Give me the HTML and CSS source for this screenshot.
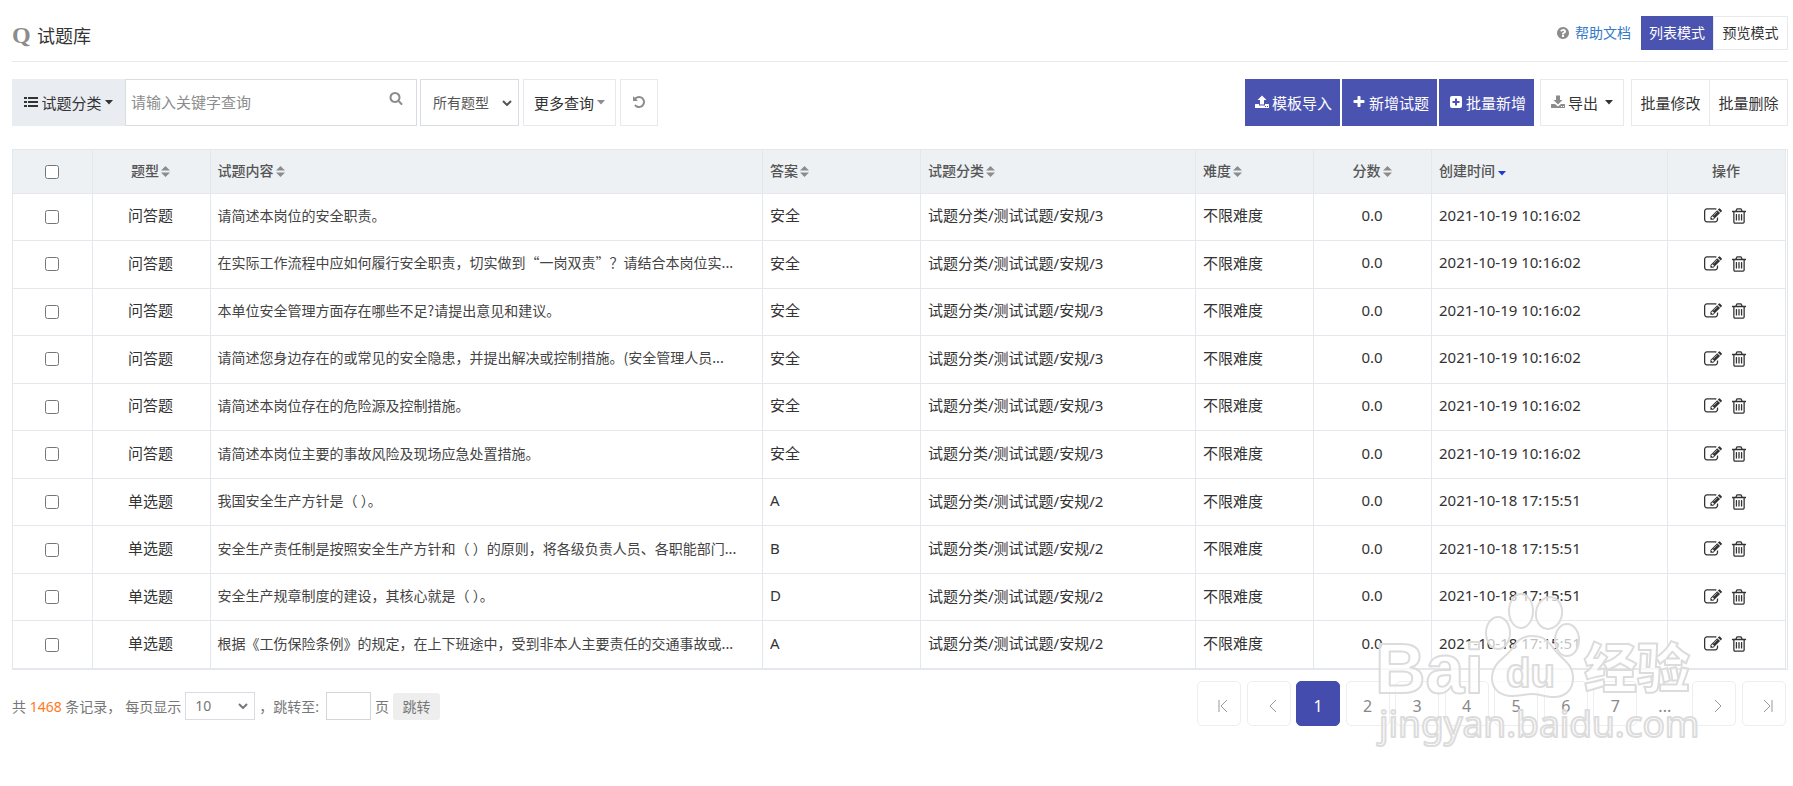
FILE: index.html
```
<!DOCTYPE html>
<html lang="zh-CN">
<head>
    <meta charset="UTF-8">
    <meta name="viewport" content="width=device-width, initial-scale=1.0">
    <title>试题库</title>
    <link rel="stylesheet" href="styles.css">
</head>
<body>
    <!-- 图标 -->
    <svg class="sprite" aria-hidden="true">
        <symbol id="i-search" viewBox="0 0 1792 1792"><path d="M1216 832q0-185-131.500-316.500t-316.500-131.500-316.500 131.500-131.500 316.500 131.500 316.500 316.500 131.500 316.500-131.500 131.500-316.500zm512 832q0 52-38 90t-90 38q-54 0-90-38l-343-342q-179 124-399 124-143 0-273.500-55.500t-225-150-150-225-55.500-273.500 55.500-273.500 150-225 225-150 273.500-55.500 273.500 55.500 225 150 150 225 55.500 273.500q0 220-124 399l343 343q37 37 37 90z"/></symbol>
        <symbol id="i-trash" viewBox="0 0 1792 1792"><path d="M704 736v576q0 14-9 23t-23 9h-64q-14 0-23-9t-9-23v-576q0-14 9-23t23-9h64q14 0 23 9t9 23zm256 0v576q0 14-9 23t-23 9h-64q-14 0-23-9t-9-23v-576q0-14 9-23t23-9h64q14 0 23 9t9 23zm256 0v576q0 14-9 23t-23 9h-64q-14 0-23-9t-9-23v-576q0-14 9-23t23-9h64q14 0 23 9t9 23zm128 724v-948h-896v948q0 22 7 40.500t14.500 27 10.500 8.500h832q3 0 10.500-8.500t14.500-27 7-40.500zm-672-1076h448l-48-117q-7-9-17-11h-317q-10 2-17 11zm928 32v64q0 14-9 23t-23 9h-96v948q0 83-47 143.500t-113 60.500h-832q-66 0-113-58.500t-47-141.500v-952h-96q-14 0-23-9t-9-23v-64q0-14 9-23t23-9h309l70-167q15-37 54-63t79-26h320q40 0 79 26t54 63l70 167h309q14 0 23 9t9 23z"/></symbol>
        <symbol id="i-edit" viewBox="0 0 1792 1792"><path d="M888 1184l116-116-152-152-116 116v56h96v96h56zm440-720q-16-16-33 1l-350 350q-17 17-1 33t33-1l350-350q17-17 1-33zm80 594v190q0 119-84.500 203.500t-203.500 84.500h-832q-119 0-203.500-84.500t-84.500-203.500v-832q0-119 84.500-203.500t203.500-84.500h832q63 0 117 25 15 7 18 23 3 17-9 29l-49 49q-14 14-32 8-23-6-45-6h-832q-66 0-113 47t-47 113v832q0 66 47 113t113 47h832q66 0 113-47t47-113v-126q0-13 9-22l64-64q15-15 35-7t20 29zm-96-738l288 288-672 672h-288v-288zm444 132l-92 92-288-288 92-92q28-28 68-28t68 28l152 152q28 28 28 68t-28 68z"/></symbol>
        <symbol id="i-help" viewBox="0 0 1792 1792"><path d="M1024 1376v-192q0-14-9-23t-23-9h-192q-14 0-23 9t-9 23v192q0 14 9 23t23 9h192q14 0 23-9t9-23zm256-672q0-88-55.500-163t-138.500-116-170-41q-243 0-371 213-15 24 8 42l132 100q7 6 19 6 16 0 25-12 53-68 86-92 34-24 86-24 48 0 85.500 26t37.500 59q0 38-20 61t-68 45q-63 28-115.500 86.500t-52.500 125.500v36q0 14 9 23t23 9h192q14 0 23-9t9-23q0-19 21.500-49.500t54.500-49.500q32-18 49-28.500t46-35 44.500-48 28-60.500 12.500-81zm384 192q0 209-103 385.500t-279.500 279.500-385.500 103-385.500-103-279.500-279.500-103-385.500 103-385.500 279.500-279.500 385.500-103 385.500 103 279.500 279.500 103 385.500z"/></symbol>
        <symbol id="i-plus" viewBox="0 0 1792 1792"><path d="M1600 736v192q0 40-28 68t-68 28h-416v416q0 40-28 68t-68 28h-192q-40 0-68-28t-28-68v-416h-416q-40 0-68-28t-28-68v-192q0-40 28-68t68-28h416v-416q0-40 28-68t68-28h192q40 0 68 28t28 68v416h416q40 0 68 28t28 68z"/></symbol>
        <symbol id="i-undo" viewBox="0 0 1792 1792"><path d="M1664 896q0 156-61 298t-164 245-245 164-298 61q-172 0-327-72.500t-264-204.500q-7-10-6.500-22.500t8.500-20.500l137-138q10-9 25-9 16 2 23 12 73 95 179 147t225 52q104 0 198.500-40.500t163.500-109.500 109.500-163.500 40.500-198.500-40.500-198.500-109.500-163.500-163.500-109.500-198.500-40.500q-98 0-188 35.500t-160 101.500l137 138q31 30 14 69-17 40-59 40h-448q-26 0-45-19t-19-45v-448q0-42 40-59 39-17 69 14l130 129q107-101 244.500-156.500t284.500-55.500q156 0 298 61t245 164 164 245 61 298z"/></symbol>
        <symbol id="i-list" viewBox="0 0 14 14"><path d="M0 2h3v2H0zM4 2h10v2H4zM0 6h3v2H0zM4 6h10v2H4zM0 10h3v2H0zM4 10h10v2H4z"/></symbol>
        <symbol id="i-upload" viewBox="0 0 14 14"><path d="M7 .5L11.500 5H9v4.500H5V5H2.500zM.5 9H4v1.500h6V9h3.500q.5 0 .5.500v3q0 .5-.5.500H.5q-.5 0-.5-.5v-3Q0 9 .5 9zM10 11v1h1v-1zm2 0v1h1v-1z"/></symbol>
        <symbol id="i-download" viewBox="0 0 14 14"><path d="M5 .5h4V5h2.500L7 9.500 2.500 5H5zM.5 9H4l3 2.500L10 9h3.500q.5 0 .5.500v3q0 .5-.5.500H.5q-.5 0-.5-.5v-3Q0 9 .5 9zM10 11v1h1v-1zm2 0v1h1v-1z"/></symbol>
        <symbol id="i-plus-square" viewBox="0 0 14 14"><path fill-rule="evenodd" d="M3 1h8q2 0 2 2v8q0 2-2 2H3q-2 0-2-2V3q0-2 2-2zm3 2.500V6H3.500v2H6v2.500h2V8h2.500V6H8V3.500z"/></symbol>
        <symbol id="i-caret" viewBox="0 0 8 5"><path d="M0 0h8L4 4.500z"/></symbol>
        <symbol id="i-sort" viewBox="0 0 10 12"><path d="M5 0l5 5H0zM0 7h10l-5 5z"/></symbol>
        <symbol id="i-chevron" viewBox="0 0 10 6"><path class="line-2" d="M1 1l4 4 4-4"/></symbol>
        <symbol id="i-first" viewBox="0 0 10 14"><path class="line-1" d="M1 1v12M9 1L3 7l6 6"/></symbol>
        <symbol id="i-prev" viewBox="0 0 10 14"><path class="line-1" d="M8 1L2 7l6 6"/></symbol>
        <symbol id="i-next" viewBox="0 0 10 14"><path class="line-1" d="M2 1l6 6-6 6"/></symbol>
        <symbol id="i-last" viewBox="0 0 10 14"><path class="line-1" d="M9 1v12M1 1l6 6-6 6"/></symbol>
    </svg>

    <!-- 标题栏 -->
    <header class="page-head">
        <span class="logo">Q</span>
        <h1>试题库</h1>
        <div class="head-right">
            <svg class="icon gray"><use href="#i-help"/></svg>
            <a href="#" class="help">帮助文档</a>
            <div class="modes">
                <button type="button" class="mode active">列表模式</button>
                <button type="button" class="mode">预览模式</button>
            </div>
        </div>
    </header>

    <!-- 工具栏 -->
    <div class="toolbar">
        <button type="button" class="btn category"><svg class="icon"><use href="#i-list"/></svg>试题分类<svg class="caret"><use href="#i-caret"/></svg></button>
        <div class="search">
            <input type="text" id="keyword" placeholder="请输入关键字查询" aria-label="关键字">
            <svg class="icon gray"><use href="#i-search"/></svg>
        </div>
        <div class="select type-select">
            <select id="type" aria-label="题型"><option>所有题型</option><option>问答题</option><option>单选题</option></select>
            <svg class="chevron"><use href="#i-chevron"/></svg>
        </div>
        <button type="button" class="btn more">更多查询<svg class="caret gray"><use href="#i-caret"/></svg></button>
        <button type="button" class="btn reset" aria-label="重置"><svg class="icon gray"><use href="#i-undo"/></svg></button>

        <div class="tool-right">
            <button type="button" class="btn primary"><svg class="icon"><use href="#i-upload"/></svg>模板导入</button>
            <button type="button" class="btn primary"><svg class="icon"><use href="#i-plus"/></svg>新增试题</button>
            <button type="button" class="btn primary"><svg class="icon"><use href="#i-plus-square"/></svg>批量新增</button>
            <button type="button" class="btn export"><svg class="icon gray"><use href="#i-download"/></svg>导出<svg class="caret"><use href="#i-caret"/></svg></button>
            <div class="batch">
                <button type="button" class="btn">批量修改</button>
                <button type="button" class="btn">批量删除</button>
            </div>
        </div>
    </div>

    <!-- 试题列表 -->
    <div class="table-wrap">
        <table>
            <colgroup>
                <col class="c-check"><col class="c-mid"><col><col class="c-answer"><col class="c-cate"><col class="c-mid"><col class="c-mid"><col class="c-time"><col class="c-mid">
            </colgroup>
            <thead>
                <tr>
                    <th class="center"><input type="checkbox" aria-label="全选"></th>
                    <th class="center">题型<svg class="sort"><use href="#i-sort"/></svg></th>
                    <th>试题内容<svg class="sort"><use href="#i-sort"/></svg></th>
                    <th>答案<svg class="sort"><use href="#i-sort"/></svg></th>
                    <th>试题分类<svg class="sort"><use href="#i-sort"/></svg></th>
                    <th>难度<svg class="sort"><use href="#i-sort"/></svg></th>
                    <th class="center">分数<svg class="sort"><use href="#i-sort"/></svg></th>
                    <th>创建时间<svg class="caret sorted"><use href="#i-caret"/></svg></th>
                    <th class="center">操作</th>
                </tr>
            </thead>
            <tbody id="rows"></tbody>
        </table>
    </div>

    <!-- 分页 -->
    <footer class="page-foot">
        <div class="summary">
            <span>共 <b>1468</b> 条记录，</span>
            <label for="size">每页显示</label>
            <div class="select size-select">
                <select id="size"><option>10</option><option>20</option><option>50</option></select>
                <svg class="chevron"><use href="#i-chevron"/></svg>
            </div>
            <label for="jump" class="jump-label">，跳转至:</label>
            <input type="text" id="jump">
            <span>页</span>
            <button type="button" class="jump-btn">跳转</button>
        </div>
        <nav class="pages">
            <button type="button" aria-label="首页"><svg><use href="#i-first"/></svg></button>
            <button type="button" aria-label="上一页"><svg><use href="#i-prev"/></svg></button>
            <button type="button" class="current">1</button>
            <button type="button">2</button>
            <button type="button">3</button>
            <button type="button">4</button>
            <button type="button">5</button>
            <button type="button">6</button>
            <button type="button">7</button>
            <span class="dots">...</span>
            <button type="button" aria-label="下一页"><svg><use href="#i-next"/></svg></button>
            <button type="button" aria-label="末页"><svg><use href="#i-last"/></svg></button>
        </nav>

        <!-- 水印 -->
        <svg class="watermark" viewBox="0 0 330 165">
            <g class="wm-shape">
                <ellipse cx="128" cy="43" rx="12" ry="16"/>
                <ellipse cx="151" cy="21" rx="12" ry="17"/>
                <ellipse cx="179" cy="23" rx="13" ry="16" transform="rotate(10 179 23)"/>
                <ellipse cx="197" cy="50" rx="12" ry="16"/>
                <path d="M162 46c-12 0-16 7-21 14-6 8-19 13-19 28 0 12 9 18 20 18 8 0 13-2 20-2s14 3 22 3c11 0 19-7 19-19 0-15-12-19-19-29-6-8-10-13-22-13z"/>
            </g>
            <text class="wm-text wm-bai" x="5" y="103">Bai</text>
            <text class="wm-text wm-du" x="136" y="97">du</text>
            <text class="wm-text wm-cn" x="214" y="98">经验</text>
            <text class="wm-text wm-url" x="9" y="147">jingyan.baidu.com</text>
        </svg>
    </footer>

    <script>
        const rows = [
            ['问答题', '请简述本岗位的安全职责。', '安全'],
            ['问答题', '在实际工作流程中应如何履行安全职责，切实做到“一岗双责”？请结合本岗位实...', '安全'],
            ['问答题', '本单位安全管理方面存在哪些不足?请提出意见和建议。', '安全'],
            ['问答题', '请简述您身边存在的或常见的安全隐患，并提出解决或控制措施。(安全管理人员...', '安全'],
            ['问答题', '请简述本岗位存在的危险源及控制措施。', '安全'],
            ['问答题', '请简述本岗位主要的事故风险及现场应急处置措施。', '安全'],
            ['单选题', '我国安全生产方针是（ ）。', 'A'],
            ['单选题', '安全生产责任制是按照安全生产方针和（ ）的原则，将各级负责人员、各职能部门...', 'B'],
            ['单选题', '安全生产规章制度的建设，其核心就是（ ）。', 'D'],
            ['单选题', '根据《工伤保险条例》的规定，在上下班途中，受到非本人主要责任的交通事故或...', 'A']
        ];

        document.getElementById('rows').innerHTML = rows.map(([type, content, answer]) => {
            const essay = type === '问答题';
            return `<tr>
                <td class="center"><input type="checkbox" aria-label="选择"></td>
                <td class="center">${type}</td>
                <td class="content">${content}</td>
                <td>${answer}</td>
                <td>试题分类/测试试题/安规/${essay ? 3 : 2}</td>
                <td>不限难度</td>
                <td class="center">0.0</td>
                <td>${essay ? '2021-10-19 10:16:02' : '2021-10-18 17:15:51'}</td>
                <td class="center">
                    <button type="button" class="op" aria-label="编辑"><svg><use href="#i-edit"/></svg></button>
                    <button type="button" class="op" aria-label="删除"><svg><use href="#i-trash"/></svg></button>
                </td>
            </tr>`;
        }).join('');
    </script>
</body>
</html>
```

FILE: styles.css
```
* {
    margin: 0;
    padding: 0;
    box-sizing: border-box;
}

body {
    font-family: 'Noto Sans', 'Noto Sans CJK SC', sans-serif;
    font-size: 15px;
    color: #333;
    background: #fff;
    min-height: 100vh;
    padding: 0 5px 0 12px;
}

button, input, select {
    font: inherit;
    color: inherit;
}

button {
    cursor: pointer;
    background: #fff;
    border: none;
}

svg {
    display: block;
    fill: currentColor;
    flex: none;
}

.sprite {
    position: absolute;
    width: 0;
    height: 0;
}

.line-1, .line-2 {
    fill: none;
    stroke: currentColor;
    stroke-width: 1;
}

.line-2 {
    stroke-width: 2;
}

.icon {
    width: 14px;
    height: 14px;
}

.caret {
    width: 8px;
    height: 5px;
}

.gray {
    color: #8c8c8c;
}

/* 标题栏 */
.page-head {
    display: flex;
    align-items: center;
    height: 62px;
    padding-top: 5px;
    border-bottom: 1px solid #e7e9eb;
}

.logo {
    width: 25px;
    padding-top: 4px;
    font: bold 24px 'Liberation Serif', serif;
    color: #8c8c8c;
}

h1 {
    padding-top: 4px;
    font-size: 18px;
    font-weight: normal;
}

.head-right {
    display: flex;
    align-items: center;
    margin-left: auto;
    font-size: 14px;
}

.help {
    margin: 0 10px 2px 5px;
    color: #337ac7;
    text-decoration: none;
}

.modes {
    display: flex;
}

.mode {
    width: 75px;
    height: 34px;
    padding-bottom: 2px;
    border: 1px solid #e7e9eb;
}

.mode.active {
    width: 72px;
    color: #fff;
    background: #4b53b1;
    border-color: #4b53b1;
}

/* 工具栏 */
.toolbar {
    display: flex;
    margin: 17px 0 23px;
}

.btn {
    display: flex;
    align-items: center;
    justify-content: center;
    height: 47px;
    padding: 0 8px 1px;
    gap: 3px;
    border: 1px solid #e7e9eb;
    white-space: nowrap;
}

.category {
    width: 113px;
    background: #e9ecf1;
    border-color: #e9ecf1;
}

.search {
    position: relative;
    width: 292px;
}

.search input {
    width: 100%;
    height: 47px;
    padding: 0 40px 1px 5px;
    border: 1px solid #d9dce3;
}

.search input::placeholder {
    color: #8c8c8c;
}

.search .icon {
    position: absolute;
    right: 14px;
    top: 12px;
}

.select {
    position: relative;
    font-size: 14px;
    color: #555;
}

.select select {
    width: 100%;
    height: 100%;
    padding: 0 0 1px 12px;
    appearance: none;
    background: #fff;
    border: 1px solid #d9dce3;
}

.chevron {
    position: absolute;
    right: 7px;
    top: 50%;
    width: 10px;
    height: 6px;
    margin-top: -3px;
    pointer-events: none;
}

.type-select {
    width: 99px;
    margin: 0 4px 0 3px;
}

.more {
    width: 93px;
    margin-right: 4px;
}

.reset {
    width: 38px;
}

.tool-right {
    display: flex;
    margin-left: auto;
    gap: 2px;
}

.primary {
    width: 95px;
    padding-left: 10px;
    color: #fff;
    background: #4b53b1;
    border-color: #4b53b1;
}

.export {
    width: 84px;
    margin: 0 5px 0 4px;
}

.export .caret {
    margin-left: 4px;
}

.batch {
    display: flex;
}

.batch .btn {
    width: 79px;
}

.batch .btn + .btn {
    width: 78px;
    border-left: none;
}

/* 列表 */
.table-wrap {
    padding-right: 1px;
    border: 1px solid #e4e7ec;
}

table {
    width: 100%;
    height: 519px;
    table-layout: fixed;
    border-collapse: collapse;
}

.c-check { width: 79px; }
.c-mid { width: 118px; }
.c-answer { width: 158px; }
.c-cate { width: 275px; }
.c-time { width: 236px; }

th, td {
    padding: 0 8px 4px 7px;
    text-align: left;
    border-right: 1px solid #e4e7ec;
    border-bottom: 1px solid #e4e7ec;
    white-space: nowrap;
}

th {
    height: 43px;
    padding-bottom: 2px;
    font-size: 14px;
    font-weight: 500;
    color: #555;
    background: #edf1f4;
}

.center {
    text-align: center;
}

.content {
    font-family: 'Noto Sans CJK SC', sans-serif;
    font-size: 14px;
    color: #444;
    overflow: hidden;
}

input[type="checkbox"] {
    width: 14px;
    height: 14px;
    vertical-align: middle;
}

.sort {
    display: inline-block;
    width: 9px;
    height: 11px;
    margin-left: 2px;
    vertical-align: -1px;
    color: #8c8c8c;
}

.sorted {
    display: inline-block;
    margin-left: 3px;
    color: #1a3fd0;
}

.op {
    margin: 0 2px;
    background: none;
    vertical-align: middle;
}

.op svg {
    width: 18px;
    height: 18px;
}

/* 分页 */
.page-foot {
    position: relative;
    display: flex;
    justify-content: space-between;
    align-items: flex-start;
    padding: 11px 2px 0 0;
}

.summary {
    display: flex;
    align-items: center;
    gap: 4px;
    margin-top: 11px;
    font-size: 14px;
    color: #777;
}

.summary b {
    font-weight: normal;
    color: #ff7a1a;
}

.size-select {
    width: 70px;
    height: 28px;
    color: #777;
}

.size-select select {
    padding-left: 9px;
}

#jump {
    width: 45px;
    height: 28px;
    margin-left: 3px;
    border: 1px solid #d3d6d9;
}

.jump-btn {
    width: 47px;
    height: 27px;
    background: #eee;
    border-radius: 3px;
}

.pages {
    display: flex;
    justify-content: space-between;
    width: 589px;
    color: #888;
}

.pages button, .dots {
    display: flex;
    align-items: center;
    justify-content: center;
    width: 44px;
    height: 45px;
    padding-top: 4px;
    border: 1px solid #eceef0;
    border-radius: 5px;
    font-size: 16px;
}

.pages svg {
    width: 10px;
    height: 14px;
    margin-left: 8px;
    color: #999;
}

.pages .dots {
    border-color: transparent;
}

.pages .current {
    color: #fff;
    background: #444cad;
    border-color: #444cad;
}

.watermark {
    position: absolute;
    top: -80px;
    right: 88px;
    width: 330px;
    height: 165px;
    overflow: visible;
    pointer-events: none;
}

.wm-shape, .wm-text {
    fill: rgba(255, 255, 255, 0.7);
    stroke: #dcdcdc;
    stroke-width: 2;
    stroke-linejoin: round;
}

.wm-bai, .wm-du {
    font-family: 'Liberation Sans', sans-serif;
    font-weight: bold;
    font-size: 70px;
}

.wm-du {
    font-size: 40px;
}

.wm-cn {
    font-family: 'Noto Sans CJK SC', sans-serif;
    font-weight: 900;
    font-size: 53px;
}

.wm-url {
    font-size: 37px;
}
```
